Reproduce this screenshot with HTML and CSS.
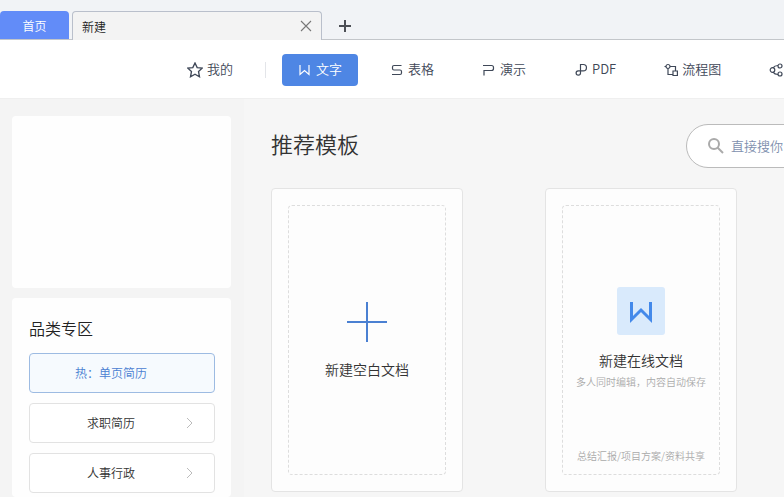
FILE: index.html
```html
<!DOCTYPE html>
<html lang="zh-CN">
<head>
    <meta charset="UTF-8">
    <meta name="viewport" content="width=device-width, initial-scale=1.0">
    <link rel="stylesheet" href="styles.css">
    <title>新建</title>
</head>
<body>
    <header class="tab-bar">
        <button class="tab home">首页</button>
        <div class="tab current">
            <span>新建</span>
            <button class="icon-btn" aria-label="关闭">
                <svg width="12" height="12" viewBox="0 0 12 12"><path d="M1 1l10 10M11 1L1 11" stroke="#777" stroke-width="1.1"/></svg>
            </button>
        </div>
        <button class="icon-btn add" aria-label="新标签">
            <svg width="12" height="12" viewBox="0 0 12 12"><path d="M6 0v12M0 6h12" stroke="#4c4f55" stroke-width="2"/></svg>
        </button>
    </header>

    <nav class="nav">
        <a href="#" class="nav-item">
            <svg class="star" viewBox="0 0 14 14"><path d="M7 .9l1.9 4 4.400.5-3.200 3 .8 4.500L7 10.700l-3.900 2.200.8-4.500-3.200-3 4.400-.5z"/></svg>
            <span>我的</span>
        </a>
        <span class="divider"></span>
        <a href="#" class="nav-item active">
            <svg viewBox="0 0 14 14"><path d="M2 2v9.500l4.500-4 4.500 4V2"/></svg>
            <span>文字</span>
        </a>
        <a href="#" class="nav-item">
            <svg viewBox="0 0 14 14"><path d="M11.500 2.500H4Q2.500 2.500 2.500 4v1.500Q2.500 7 4 7h6Q11.500 7 11.500 8.500V10q0 1.500-1.500 1.500H2"/></svg>
            <span>表格</span>
        </a>
        <a href="#" class="nav-item">
            <svg viewBox="0 0 14 14"><path d="M1 2.500H9.500q2 0 2 2v1q0 2-2 2H2V12.500"/></svg>
            <span>演示</span>
        </a>
        <a href="#" class="nav-item">
            <svg viewBox="0 0 14 14"><path d="M6.500 7.800V1.500h2.800a3.150 3.150 0 010 6.300H4.200a2.200 2.200 0 102.300 2.200z"/></svg>
            <span>PDF</span>
        </a>
        <a href="#" class="nav-item">
            <svg viewBox="0 0 14 14"><circle cx="4" cy="3.500" r="2"/><path d="M2 3.500H.5M6 3.500h5.500v4M4 5.500v6h5M9 8h4.400v4.500H9z"/></svg>
            <span>流程图</span>
        </a>
        <a href="#" class="nav-item" aria-label="思维导图">
            <svg viewBox="0 0 14 14"><circle cx="3.500" cy="7" r="2.300"/><circle cx="11" cy="3" r="2"/><circle cx="11" cy="11" r="2"/><path d="M4 4.800Q5.500 2.500 9 2.500M4 9.200Q5.500 11.500 9 11.500"/></svg>
        </a>
    </nav>

    <div class="layout">
        <aside class="sidebar">
            <div class="panel account"></div>
            <div class="panel categories">
                <h2>品类专区</h2>
                <button class="category hot"><span>热：单页简历</span></button>
                <button class="category">
                    <span>求职简历</span>
                    <svg width="8" height="12" viewBox="0 0 8 12"><path d="M1 1l5 5-5 5"/></svg>
                </button>
                <button class="category">
                    <span>人事行政</span>
                    <svg width="8" height="12" viewBox="0 0 8 12"><path d="M1 1l5 5-5 5"/></svg>
                </button>
            </div>
        </aside>

        <main class="content">
            <div class="content-head">
                <h1>推荐模板</h1>
                <label class="search">
                    <svg width="16" height="16" viewBox="0 0 16 16"><circle cx="6" cy="6" r="5"/><path d="M9.500 9.500l5.500 5.500"/></svg>
                    <input type="text" placeholder="直接搜你" aria-label="搜索模板">
                </label>
            </div>
            <div class="cards">
                <a href="#" class="card">
                    <div class="card-inner blank">
                        <svg width="40" height="40" viewBox="0 0 40 40"><path d="M20 0v40M0 20h40" stroke="#4a80d2" stroke-width="2"/></svg>
                        <h3>新建空白文档</h3>
                    </div>
                </a>
                <a href="#" class="card">
                    <div class="card-inner online">
                        <svg width="48" height="48" viewBox="0 0 48 48"><rect width="48" height="48" rx="3" fill="#d9eafc"/><path d="M14.500 15v17.500L24 23l9.500 9.500V15" fill="none" stroke="#4389ea" stroke-width="3"/></svg>
                        <h3>新建在线文档</h3>
                        <p>多人同时编辑，内容自动保存</p>
                        <p class="card-foot">总结汇报/项目方案/资料共享</p>
                    </div>
                </a>
            </div>
        </main>
    </div>
</body>
</html>
```

FILE: styles.css
```css
* {
    box-sizing: border-box;
}

body {
    margin: 0;
    height: 100vh;
    overflow: hidden;
    display: flex;
    flex-direction: column;
    font-family: 'Noto Sans CJK SC', sans-serif;
    font-weight: 350;
    font-size: 13px;
    color: #333;
    background-color: #f6f6f6;
}

h1, h2, h3, p {
    margin: 0;
    font-weight: 350;
}

a {
    color: inherit;
    text-decoration: none;
}

button, input {
    font: inherit;
    color: inherit;
}

svg {
    display: block;
    flex: none;
}

.tab-bar {
    display: flex;
    flex: none;
    height: 40px;
    padding-top: 11px;
    background-color: #f1f3f6;
    box-shadow: inset 0 -1px #c3c6ca;
}

.tab {
    font-size: 12px;
    border-radius: 4px 4px 0 0;
}

.home {
    width: 69px;
    height: 28px;
    padding: 0;
    border: none;
    color: white;
    background-color: #628cf8;
}

.current {
    display: flex;
    align-items: center;
    justify-content: space-between;
    width: 250px;
    margin-left: 3px;
    padding: 0 9px;
    border: 1px solid #b9bfcb;
    border-bottom: none;
    color: #222;
    background-color: #f3f3f3;
}

.icon-btn {
    padding: 0;
    border: none;
    background: none;
    cursor: pointer;
}

.add {
    margin-left: 17px;
}

.nav {
    display: flex;
    flex: none;
    align-items: center;
    gap: 16px;
    height: 59px;
    padding: 1px 0 0 171px;
    color: #3f4858;
    background-color: white;
    border-bottom: 1px solid #efefef;
}

.nav-item {
    display: flex;
    flex: none;
    align-items: center;
    gap: 4px;
    height: 32px;
    padding: 0 16px;
    border-radius: 4px;
    white-space: nowrap;
}

.nav-item span {
    padding-bottom: 2px;
}

.nav-item svg {
    width: 14px;
    height: 14px;
    fill: none;
    stroke: currentColor;
    stroke-width: 1.2;
}

.nav-item .star {
    width: 16px;
    height: 16px;
}

.active {
    color: white;
    background-color: #4e86e4;
}

.divider {
    flex: none;
    width: 1px;
    height: 16px;
    background-color: #e3e5e9;
}

.layout {
    display: flex;
    flex: 1;
    min-height: 0;
}

.sidebar {
    display: flex;
    flex: none;
    flex-direction: column;
    gap: 10px;
    width: 244px;
    padding: 17px 13px 0 12px;
    background-color: #f4f4f4;
}

.panel {
    border-radius: 4px;
    background-color: #fefefe;
}

.account {
    flex: none;
    height: 172px;
}

.categories {
    display: flex;
    flex: 1;
    flex-direction: column;
    gap: 10px;
    padding: 18px 16px 0 17px;
}

.categories h2 {
    font-size: 16px;
    line-height: 24px;
    margin-bottom: 3px;
    color: #222;
}

.category {
    display: flex;
    flex: none;
    align-items: center;
    height: 40px;
    padding: 0 20px 0 6px;
    border: 1px solid #e2e2e2;
    border-radius: 4px;
    font-size: 12px;
    background-color: white;
    cursor: pointer;
}

.category span {
    flex: 1;
    padding-bottom: 2px;
}

.category svg {
    fill: none;
    stroke: #bbb;
}

.hot {
    padding-right: 28px;
    color: #4a80d2;
    border-color: #9dbbe2;
    background-color: #f6fafe;
}

.content {
    flex: 1;
    min-width: 0;
    padding: 25px 0 0 27px;
    overflow: hidden;
}

.content-head {
    display: flex;
    align-items: flex-start;
    height: 44px;
    margin-bottom: 20px;
}

.content-head h1 {
    flex: 0 0 415px;
    font-size: 22px;
    line-height: 38px;
}

.search {
    display: flex;
    flex: 0 0 300px;
    align-items: center;
    gap: 7px;
    height: 44px;
    padding: 0 21px;
    border: 1px solid #bbb;
    border-radius: 22px;
    background-color: white;
}

.search svg {
    fill: none;
    stroke: #aaa;
    stroke-width: 2;
}

.search input {
    flex: 1;
    min-width: 0;
    padding: 0 0 2px;
    border: none;
    outline: none;
    background: none;
}

.search input::placeholder {
    color: #7e8fae;
}

.cards {
    display: grid;
    grid-template-columns: repeat(auto-fill, 192px);
    gap: 82px;
}

.card {
    height: 304px;
    padding: 16px;
    border: 1px solid #e4e4e4;
    border-radius: 4px;
    background-color: #fdfdfd;
}

.card-inner {
    display: flex;
    flex-direction: column;
    align-items: center;
    height: 100%;
    border: 1px dashed #ddd;
    border-radius: 4px;
}

.card h3 {
    font-size: 14px;
    line-height: 20px;
}

.blank {
    padding-top: 96px;
    gap: 17px;
}

.online {
    padding: 81px 0 8px;
}

.online h3 {
    margin: 15px 0 2px;
}

.online p {
    font-size: 10px;
    line-height: 20px;
    color: #aaa;
}

.online .card-foot {
    margin-top: auto;
}
```
